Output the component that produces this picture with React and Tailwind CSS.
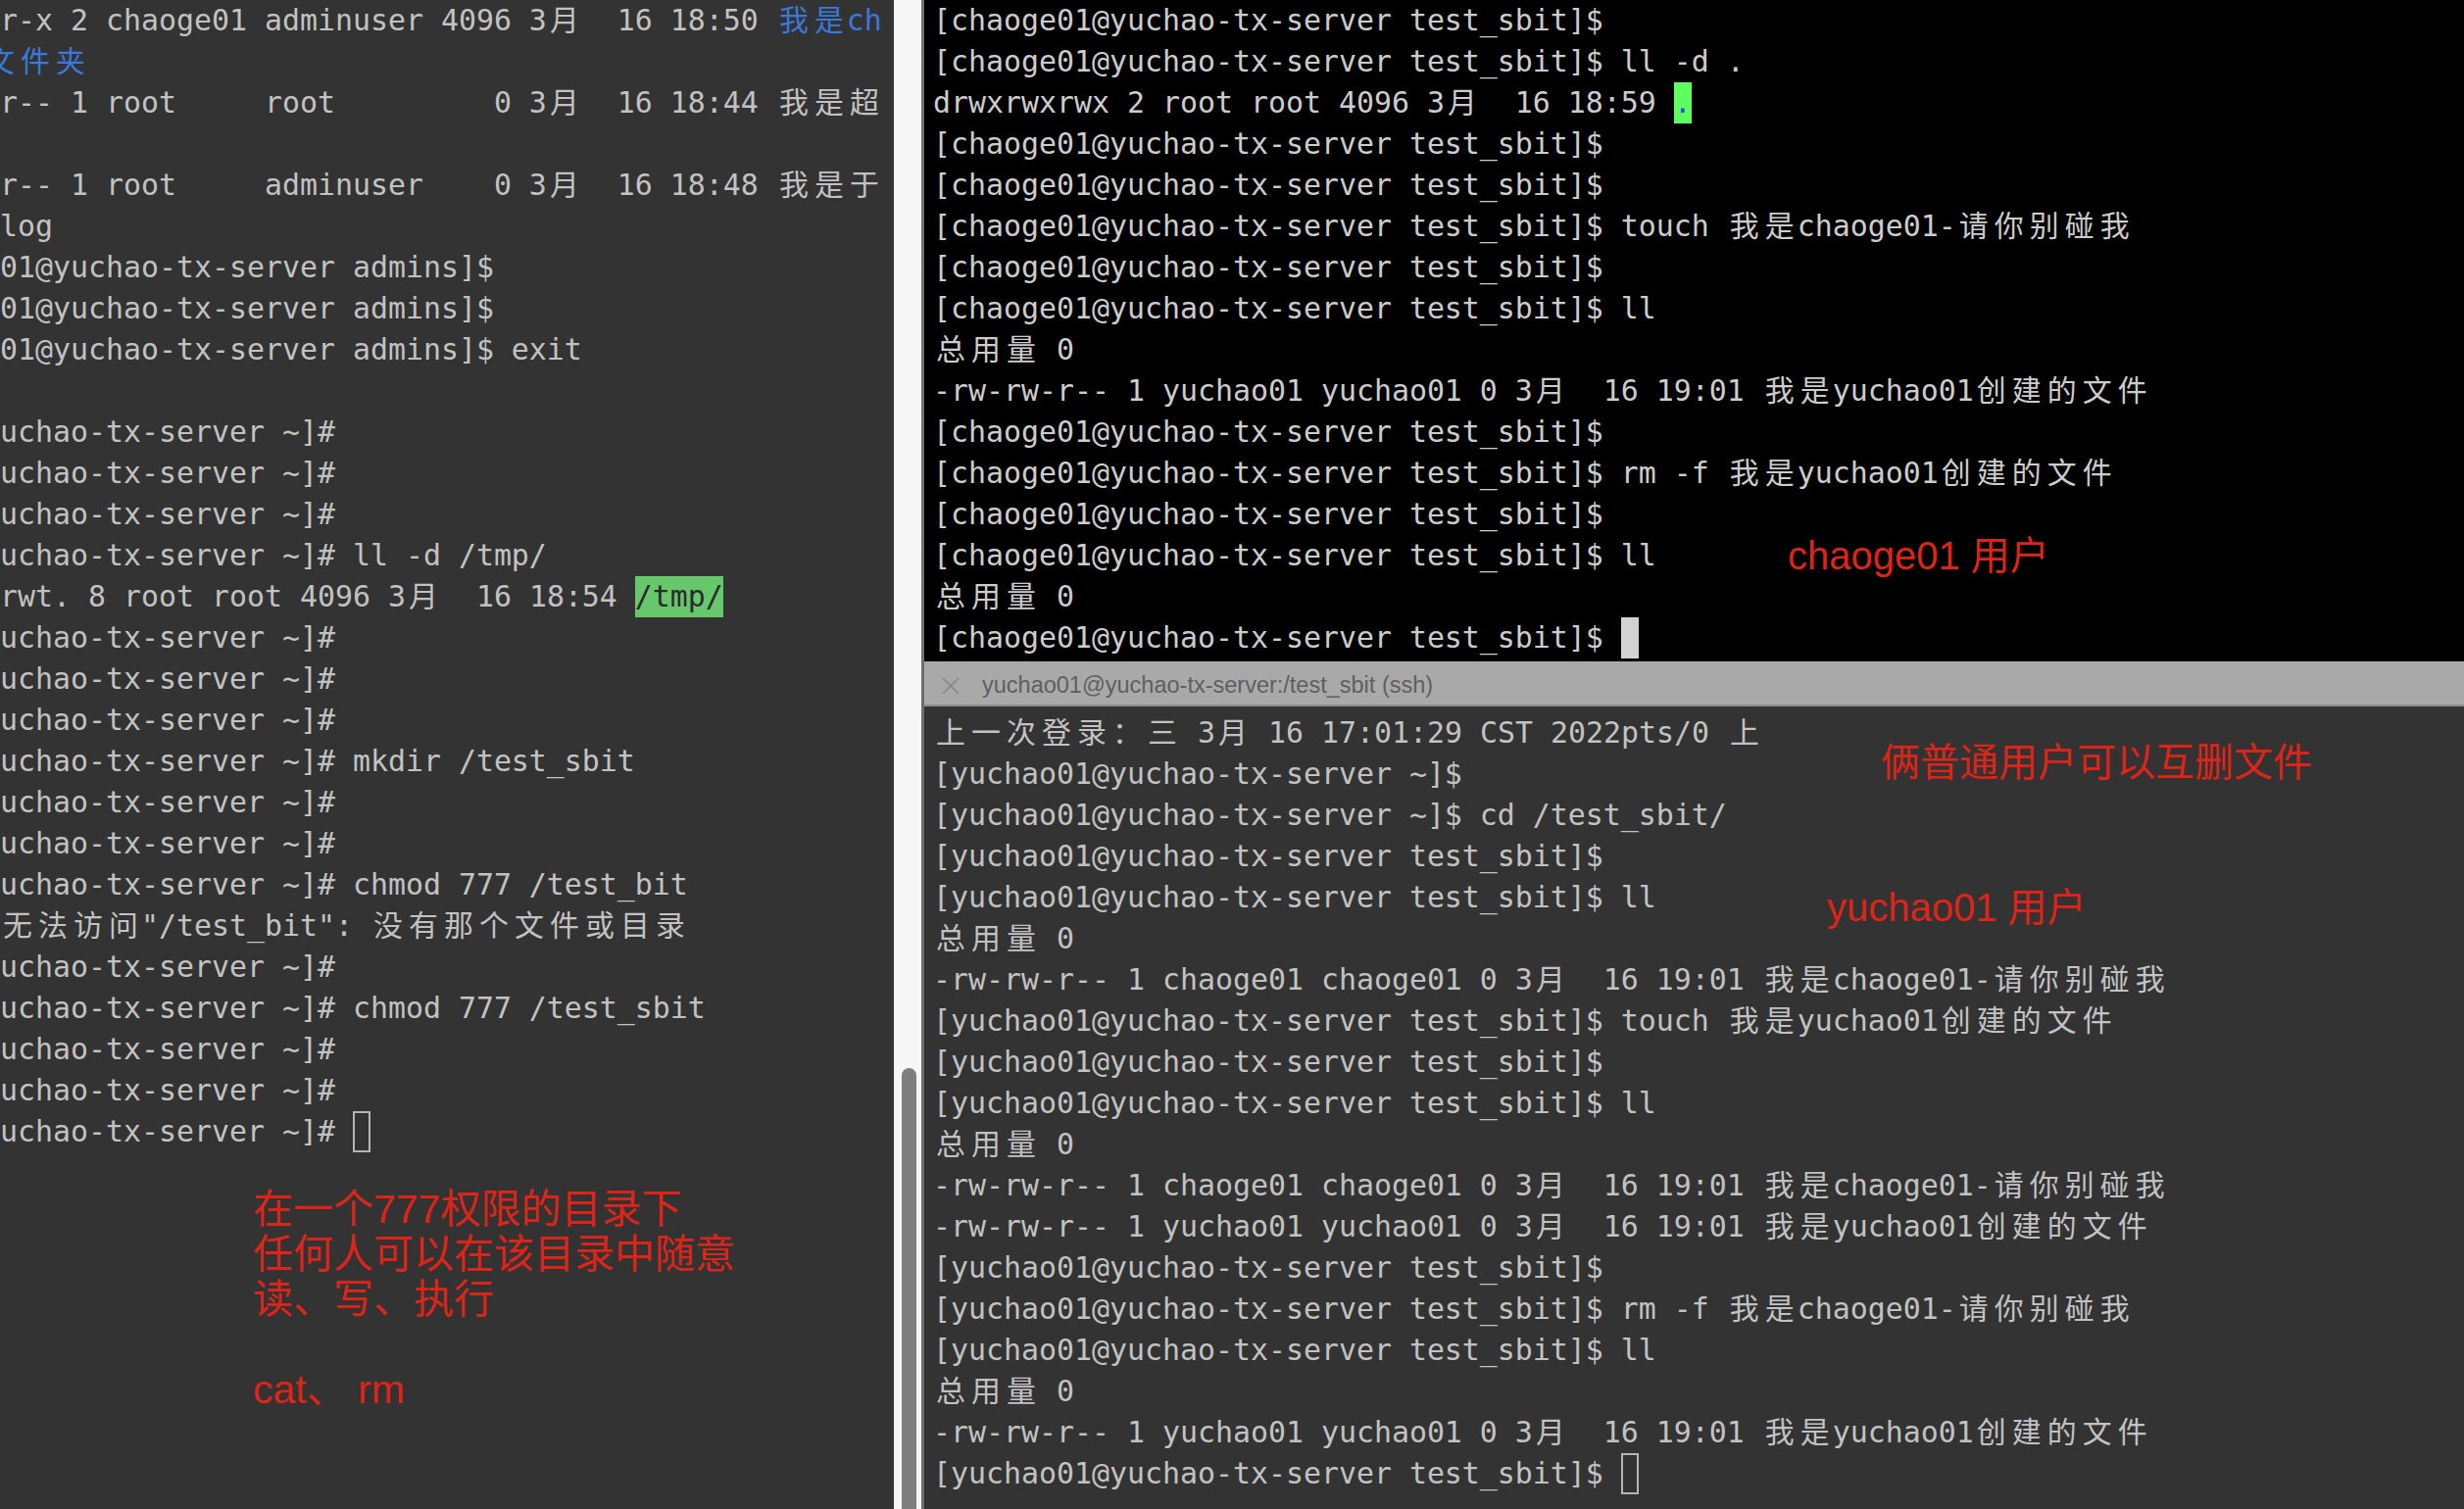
import React from "react";

const CJK = /[\u2E80-\u9FFF\uFF00-\uFFEF\u3000-\u303F]/;

function Cells({ text }) {
  const out = [];
  let buf = "";
  [...text].forEach((ch, i) => {
    if (CJK.test(ch)) {
      if (buf) {
        out.push(buf);
        buf = "";
      }
      out.push(
        <span key={i} className="inline-block w-[36px] text-center">
          {ch}
        </span>
      );
    } else buf += ch;
  });
  if (buf) out.push(buf);
  return <>{out}</>;
}

function Seg({ s }) {
  if (typeof s === "string") return <Cells text={s} />;
  if (s.blue)
    return (
      <span className="text-[#3a78dc]">
        <Cells text={s.blue} />
      </span>
    );
  if (s.green)
    return (
      <span className="inline-block h-[42px] align-top bg-[#66c86b] text-[#2b2b2b]">
        {s.green}
      </span>
    );
  if (s.bright)
    return (
      <span className="inline-block h-[42px] align-top bg-[#5cff5c] text-[#2f4cff]">
        {s.bright}
      </span>
    );
  if (s.cursor === "solid")
    return <span className="inline-block w-[18px] h-[42px] align-top bg-[#d2d2d2]" />;
  if (s.cursor === "hollow")
    return <span className="inline-block w-[18px] h-[42px] align-top border-2 border-[#b5b5b5]" />;
  return null;
}

function Lines({ lines }) {
  return lines.map((segs, i) => (
    <div key={i} className="h-[42px] leading-[42px] whitespace-pre">
      {segs.map((s, j) => (
        <Seg key={j} s={s} />
      ))}
    </div>
  ));
}

const R = "uchao-tx-server ~]#";
const A = "01@yuchao-tx-server admins]$";
const leftLines = [
  ["r-x 2 chaoge01 adminuser 4096 3月  16 18:50 ", { blue: "我是ch" }],
  null,
  ["r-- 1 root     root         0 3月  16 18:44 我是超"],
  [""],
  ["r-- 1 root     adminuser    0 3月  16 18:48 我是于"],
  ["log"],
  [A],
  [A],
  [A + " exit"],
  [""],
  [R],
  [R],
  [R],
  [R + " ll -d /tmp/"],
  ["rwt. 8 root root 4096 3月  16 18:54 ", { green: "/tmp/" }],
  [R],
  [R],
  [R],
  [R + " mkdir /test_sbit"],
  [R],
  [R],
  [R + " chmod 777 /test_bit"],
  ['无法访问"/test_bit": 没有那个文件或目录'],
  [R],
  [R + " chmod 777 /test_sbit"],
  [R],
  [R],
  [R + " ", { cursor: "hollow" }],
];

const P1 = "[chaoge01@yuchao-tx-server test_sbit]$";
const topLines = [
  [P1],
  [P1 + " ll -d ."],
  ["drwxrwxrwx 2 root root 4096 3月  16 18:59 ", { bright: "." }],
  [P1],
  [P1],
  [P1 + " touch 我是chaoge01-请你别碰我"],
  [P1],
  [P1 + " ll"],
  ["总用量 0"],
  ["-rw-rw-r-- 1 yuchao01 yuchao01 0 3月  16 19:01 我是yuchao01创建的文件"],
  [P1],
  [P1 + " rm -f 我是yuchao01创建的文件"],
  [P1],
  [P1 + " ll"],
  ["总用量 0"],
  [P1 + " ", { cursor: "solid" }],
];

const P2 = "[yuchao01@yuchao-tx-server test_sbit]$";
const H2 = "[yuchao01@yuchao-tx-server ~]$";
const F1 = "-rw-rw-r-- 1 chaoge01 chaoge01 0 3月  16 19:01 我是chaoge01-请你别碰我";
const F2 = "-rw-rw-r-- 1 yuchao01 yuchao01 0 3月  16 19:01 我是yuchao01创建的文件";
const bottomLines = [
  ["上一次登录：三 3月 16 17:01:29 CST 2022pts/0 上"],
  [H2],
  [H2 + " cd /test_sbit/"],
  [P2],
  [P2 + " ll"],
  ["总用量 0"],
  [F1],
  [P2 + " touch 我是yuchao01创建的文件"],
  [P2],
  [P2 + " ll"],
  ["总用量 0"],
  [F1],
  [F2],
  [P2],
  [P2 + " rm -f 我是chaoge01-请你别碰我"],
  [P2 + " ll"],
  ["总用量 0"],
  [F2],
  [P2 + " ", { cursor: "hollow" }],
];

const MONO = "font-['DejaVu_Sans_Mono','Noto_Sans_CJK_SC',monospace] text-[29.9px]";
const NOTE = "font-['Liberation_Sans','Noto_Sans_CJK_SC',sans-serif] text-[41px] leading-[46px] text-[#dd2419] whitespace-pre";
const NOTE_R = "font-['Liberation_Sans','Noto_Sans_CJK_SC',sans-serif] text-[40px] leading-[46px] text-[#dd2419] whitespace-pre";

export default function App() {
  return (
    <div className="flex w-[2514px] h-[1540px] overflow-hidden bg-[#333333]">
      {/* left terminal */}
      <div className={`w-[912px] shrink-0 h-full overflow-hidden bg-[#333333] text-[#c2c2c2] ${MONO}`}>
        {leftLines.map((segs, i) =>
          segs === null ? (
            <div key={i} className="h-[42px] leading-[42px] whitespace-pre -ml-[18px] text-[#3a78dc]">
              <Cells text="文件夹" />
            </div>
          ) : (
            <div key={i} className="h-[42px] leading-[42px] whitespace-pre">
              {segs.map((s, j) => (
                <Seg key={j} s={s} />
              ))}
            </div>
          )
        )}
        <div className={`mt-[35px] pl-[258px] ${NOTE}`}>
          <div className="h-[46px]">在一个777权限的目录下</div>
          <div className="h-[46px]">任何人可以在该目录中随意</div>
          <div className="h-[46px]">读、写、执行</div>
          <div className="h-[46px]"></div>
          <div className="h-[46px]">cat、 rm</div>
        </div>
      </div>

      {/* scroll strip */}
      <div className="w-[28px] shrink-0 h-full bg-[#f6f6f6] flex flex-col pt-[1090px] pl-[8px]">
        <div className="w-[15px] flex-1 bg-[#7f7f7f] rounded-t-[8px]" />
      </div>

      {/* right side */}
      <div className="flex-1 h-full flex flex-col border-l-[3px] border-[#6e6e6e] relative">
        <div className={`h-[675px] shrink-0 bg-black text-[#cccccc] pl-[9px] overflow-hidden ${MONO}`}>
          <Lines lines={topLines} />
        </div>
        <div className="h-[46px] shrink-0 bg-[#a9a9a9] border-b-2 border-[#8e8e8e] flex items-center pl-[17px] pt-[6px]">
          <svg width="20" height="18" viewBox="0 0 20 18" className="shrink-0">
            <path d="M2 1 L18 17 M18 1 L2 17" stroke="#858585" strokeWidth="1.6" fill="none" />
          </svg>
          <span className="ml-[22px] font-['Liberation_Sans',sans-serif] text-[23.5px] text-[#5f5f5f] whitespace-pre">
            yuchao01@yuchao-tx-server:/test_sbit (ssh)
          </span>
        </div>
        <div className={`flex-1 bg-[#333333] text-[#c2c2c2] pt-[6px] pl-[9px] overflow-hidden ${MONO}`}>
          <Lines lines={bottomLines} />
        </div>

        <div className={`absolute left-[881px] top-[544px] ${NOTE_R}`}>chaoge01 用户</div>
        <div className={`absolute left-[976px] top-[755px] ${NOTE_R}`}>俩普通用户可以互删文件</div>
        <div className={`absolute left-[921px] top-[903px] ${NOTE_R}`}>yuchao01 用户</div>
      </div>
    </div>
  );
}
